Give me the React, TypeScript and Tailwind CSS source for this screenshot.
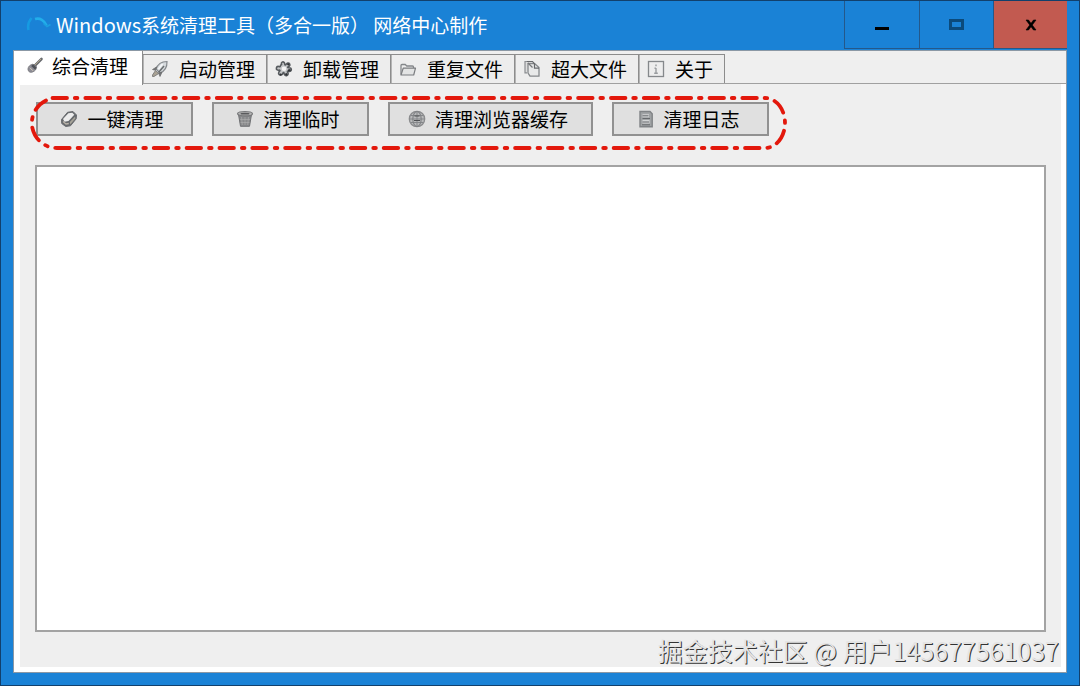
import { useState } from 'react';
import type { ReactNode } from 'react';

interface Item {
  id: string;
  label: string;
  icon: ReactNode;
}

const svgProps = {
  viewBox: '0 0 18 18',
  fill: 'none',
  'aria-hidden': true,
  className: 'size-[18px] shrink-0',
};

const BroomIcon = () => (
  <svg {...svgProps}>
    <path d="M9 8.5 15.5 2" stroke="#6a6c70" strokeWidth="2.6" strokeLinecap="round" />
    <path d="M9 8 15 2" stroke="#b5a98c" strokeWidth="0.9" />
    <path d="M7 7.2c-2.600.2-5.400 2.600-5 5.600.5 2.400 2.800 3 4.600 2.200 2.600-1 4.200-3 3.900-5.400Z" fill="#8d8d96" stroke="#77777c" strokeWidth="0.8" />
    <path d="m7 7.3 3.400 3.200-1.200 2.200-4-3.800Z" fill="#4f5257" />
    <path d="m4 10.800 3 3" stroke="#d5cbb8" strokeWidth="1" />
  </svg>
);

const RocketIcon = () => (
  <svg {...svgProps}>
    <path d="M5 9C6.5 4.6 10.5 1.6 16 1.5c.2 5.5-2.500 9.700-7 11.500Z" fill="#d6dadd" stroke="#85898d" strokeWidth="1.2" />
    <path d="M5.5 7 1.5 9.500l3 .8ZM11 12.200l-2 4.300-1.300-3.200Z" fill="#74777c" stroke="#666" strokeWidth="0.7" />
    <path d="m4.500 10.500 3.200 3L3 16.500H1.500V15Z" fill="#a9a294" stroke="#707070" strokeWidth="0.8" />
    <path d="m7.500 12.500 5.500-6.500" stroke="#6a6e70" strokeWidth="1.5" />
    <path d="m7.500 9 4-5" stroke="#f6f7f8" strokeWidth="1.6" />
  </svg>
);

const PuzzleIcon = () => (
  <svg {...svgProps}>
    <path
      d="M6.5 4.5C5.8 2 8 1.2 9.2 2.6c.8 1 .2 1.900 1 2.400.8.300 1-1.600 2.600-1.900 1.800-.2 2.700 1.700 1.600 2.900-.7.800-1.600.6-1.700 1.400.1.800 2-.1 3 .8 1.300 1.200.500 3.300-1.200 3.300-1 0-1.500-.8-2-.3-.5.6.9 1.500.6 2.900-.4 1.700-2.700 2.100-3.600.6-.6-1-.1-1.900-.9-2.100-.8-.1-.7 1.600-2 2.300-1.700.8-3.500-.8-2.900-2.500.3-1 1.500-1.200 1.200-2-.4-.6-1.600.2-2.700-.5-1.500-1-.9-3.300.9-3.500 1-.1 1.500.7 2 .2.600-.5-.5-1.100 1.400-2.100Z"
      fill="#c3c5c7"
      stroke="#55595d"
      strokeWidth="1.6"
    />
    <circle cx="9" cy="8.800" r="2.300" fill="#f4f4f4" />
    <path d="m13 10.500 2.500-.5M10.500 13.500l1.500 1.500M5 14l1.500 1M12.500 4l1.500 1" stroke="#2e3033" strokeWidth="1.8" />
  </svg>
);

const FolderIcon = () => (
  <svg {...svgProps}>
    <path d="M2 14.500V5.500c0-.6.4-1 1-1h3.200l1.600 1.500h5.700c.6 0 1 .4 1 1v1" stroke="#84878a" strokeWidth="1.3" />
    <path d="M2 15 4.2 8.200h12.300l-1.800 6.800Z" fill="#e3e4e4" stroke="#7b7d80" strokeWidth="1.2" strokeLinejoin="round" />
  </svg>
);

const PagesIcon = () => (
  <svg {...svgProps}>
    <path d="M6 1.500H2v11.300h2" fill="#ddd" stroke="#8b8e91" strokeWidth="1.2" />
    <path d="M5 3.500h6.500L16 7.500v8.700H7L5 13Z" fill="#e8e9e9" stroke="#85888b" strokeWidth="1.3" strokeLinejoin="round" />
    <path d="M4 1.500h5.500L11.500 4v4.200H16" stroke="#67696c" strokeWidth="1.2" />
    <path d="m5 3 4.500 4.500" stroke="#77797c" strokeWidth="1.2" />
  </svg>
);

const InfoIcon = () => (
  <svg {...svgProps}>
    <rect x="1.5" y="1.5" width="15" height="15" fill="#ededed" stroke="#85888b" strokeWidth="1.3" />
    <path d="M9 4.500v1.800M9 8v5.200M7.500 8.200H9M7.200 13.200h3.600" stroke="#999c9f" strokeWidth="1.4" />
  </svg>
);

const SpongeIcon = () => (
  <svg {...svgProps}>
    <path d="m1.500 9.500 6-7.200 5.500-.8 3.500 3.500-.3 3.800-5.700 7-4.800.7-4-3Z" fill="#66696d" stroke="#6a6c70" strokeWidth="1" strokeLinejoin="round" />
    <path d="M3 9 8.300 3.300l4-.5 2 2L8.500 11l-4 .8Z" fill="#ececec" />
    <path d="m9.800 12 5.300-5.500.2 2-5 6Z" fill="#a8a59a" />
    <path d="m3 11.500 3 2.500 2.800-.5" stroke="#b9b3a9" strokeWidth="1.3" />
  </svg>
);

const TrashIcon = () => (
  <svg {...svgProps}>
    <path d="M2.500 4.500h13l-2 11.800h-9Z" fill="#88898b" stroke="#707174" strokeWidth="1" />
    <ellipse cx="9" cy="3.7" rx="7.5" ry="2.2" fill="#b4b4b4" stroke="#78797b" strokeWidth="1.2" />
    <ellipse cx="9" cy="3.7" rx="4.5" ry="0.9" fill="#5a5b5d" />
    <path d="m5.500 7 .8 8M9 7v8m3.500-8-.8 8M4 9.500h10m-9.500 3h9" stroke="#b0b0b0" strokeWidth="0.6" />
  </svg>
);

const GlobeIcon = () => (
  <svg {...svgProps}>
    <circle cx="9" cy="9" r="7.7" fill="#b9babb" stroke="#8b8c8e" strokeWidth="1.3" />
    <path d="M2.500 5.500h13M1.500 9h15m-14 3.500h13M9 1.500v15" stroke="#85878a" strokeWidth="1" />
    <ellipse cx="9" cy="9" rx="4.2" ry="7.5" stroke="#818386" strokeWidth="1.1" />
    <path d="M6.500 6h5M6 10.500h6" stroke="#4e5053" strokeWidth="1" />
  </svg>
);

const LogIcon = () => (
  <svg {...svgProps}>
    <path d="M3 1.500h10l2.200 2.200v13H3Z" fill="#a0a3a5" stroke="#808386" strokeWidth="1.4" />
    <path d="M5.500 4.300h6.500v3H5.500ZM5.500 10h7v3.500h-7Z" fill="#d2d4d5" />
    <path d="M5.500 8.500H13M5.500 5.800h6M5.500 12h6.500M5 14.800h8" stroke="#66696c" strokeWidth="1" />
  </svg>
);

const tabs: Item[] = [
  { id: 'clean', label: '综合清理', icon: <BroomIcon /> },
  { id: 'startup', label: '启动管理', icon: <RocketIcon /> },
  { id: 'uninstall', label: '卸载管理', icon: <PuzzleIcon /> },
  { id: 'duplicate', label: '重复文件', icon: <FolderIcon /> },
  { id: 'large', label: '超大文件', icon: <PagesIcon /> },
  { id: 'about', label: '关于', icon: <InfoIcon /> },
];

const actions: Item[] = [
  { id: 'all', label: '一键清理', icon: <SpongeIcon /> },
  { id: 'temp', label: '清理临时', icon: <TrashIcon /> },
  { id: 'browser', label: '清理浏览器缓存', icon: <GlobeIcon /> },
  { id: 'logs', label: '清理日志', icon: <LogIcon /> },
];

function TitleBar() {
  return (
    <header className="flex h-[49px] items-start justify-between">
      <div className="flex h-12 items-center gap-1 pl-[13px]">
        <svg viewBox="0 0 26 20" fill="none" aria-hidden className="h-5 w-[26px]">
          <path d="M2.500 15C1.500 10.500 2.500 6.500 5.500 3" stroke="#169be2" strokeWidth="2.6" />
          <path d="M9 4C14 2.500 18.500 5.500 20.500 10.500" stroke="#22aeea" strokeWidth="2.6" />
          <path d="m17.500 8.500 3.500 3 3.500-2" stroke="#1c9fe0" strokeWidth="1.6" />
        </svg>
        <h1 className="text-[19px] leading-6 whitespace-nowrap text-white">
          <span className="text-[20px]">Windows</span>系统清理工具（多合一版） 网络中心制作
        </h1>
      </div>
      <div className="flex h-12 border-b border-l border-[#24588a]">
        <button type="button" aria-label="最小化" className="flex w-[75px] items-center justify-center border-r border-[#24588a]">
          <span className="mt-2 h-[3px] w-[14px] bg-black" />
        </button>
        <button type="button" aria-label="最大化" className="flex w-[74px] items-center justify-center border-r border-[#24588a]">
          <span className="h-[11px] w-[15px] border-[3px] border-[#0b4a7b]" />
        </button>
        <button type="button" aria-label="关闭" className="flex w-[73px] items-center justify-center bg-[#c25a50]">
          <svg viewBox="0 0 12 12" className="size-3" aria-hidden>
            <path d="M1 1h2.500l7.500 10H8.500ZM8.500 1H11L3.500 11H1Z" fill="#000" stroke="#000" strokeWidth="0.6" />
          </svg>
        </button>
      </div>
    </header>
  );
}

// red dash-dot frame around the action row
function Highlight() {
  return (
    <svg viewBox="0 0 761 56" fill="none" aria-hidden className="pointer-events-none absolute -top-[7px] -left-2 h-14 w-[761px]">
      <path
        d="M24.500 3H737a20 25 0 0 1 0 50H29A25 25 0 0 1 18 5.500"
        stroke="#e3180c"
        strokeWidth="3.8"
        strokeLinecap="round"
        strokeDasharray="14.5 7.8 2.6 7.95"
      />
    </svg>
  );
}

export default function App() {
  const [active, setActive] = useState('clean');
  const [output, setOutput] = useState('');

  return (
    <div className="relative flex min-h-screen flex-col border border-[#12406c] bg-[#1a82d6] px-3 pb-3 font-['Noto_Sans_CJK_SC',sans-serif]">
      <TitleBar />

      <main className="flex flex-1 flex-col border border-[#8b98a5] bg-[#efefef]">
        <div role="tablist" className="flex h-[33px] items-start border-b border-[#a0a0a0]">
          {tabs.map((tab) => {
            const selected = tab.id === active;
            return (
              <button
                key={tab.id}
                type="button"
                role="tab"
                aria-selected={selected}
                onClick={() => setActive(tab.id)}
                className={`flex items-center border-r border-[#8c8c8c] text-[19px] leading-6 whitespace-nowrap text-black ${
                  selected
                    ? 'h-[34px] gap-2 bg-white pr-[14px] pb-1 pl-3'
                    : 'mt-[3px] h-[29px] gap-[10px] border-t bg-[#ededed] pr-[11px] pl-2 shadow-[inset_1px_0_0_#b4b4b4]'
                }`}
              >
                {tab.icon}
                {tab.label}
              </button>
            );
          })}
        </div>

        <section role="tabpanel" className="flex flex-1 flex-col border-r-[5px] border-b-[5px] border-l-[6px] border-white px-[15px] pt-[18px] pb-[35px]">
          <div className="relative ml-px flex gap-[19px]">
            {actions.map((action) => (
              <button
                key={action.id}
                type="button"
                className="flex h-[34px] min-w-[157px] items-center justify-center gap-[9px] border-2 border-[#919191] bg-[#e0e0e0] pr-[23px] pl-[18px] text-[19px] leading-6 whitespace-nowrap text-black"
              >
                {action.icon}
                {action.label}
              </button>
            ))}
            <Highlight />
          </div>

          <textarea
            aria-label="清理结果"
            value={output}
            onChange={(e) => setOutput(e.target.value)}
            className="mt-[29px] w-full flex-1 resize-none border-2 border-[#a3a3a3] bg-white p-2 text-base outline-none"
          />
        </section>
      </main>

      <div className="pointer-events-none absolute right-5 bottom-[17px] text-[25px] leading-9 whitespace-nowrap text-[#e4e4e4] [text-shadow:1px_1px_0_#333]">
        掘金技术社区 @ 用户145677561037
      </div>
    </div>
  );
}
